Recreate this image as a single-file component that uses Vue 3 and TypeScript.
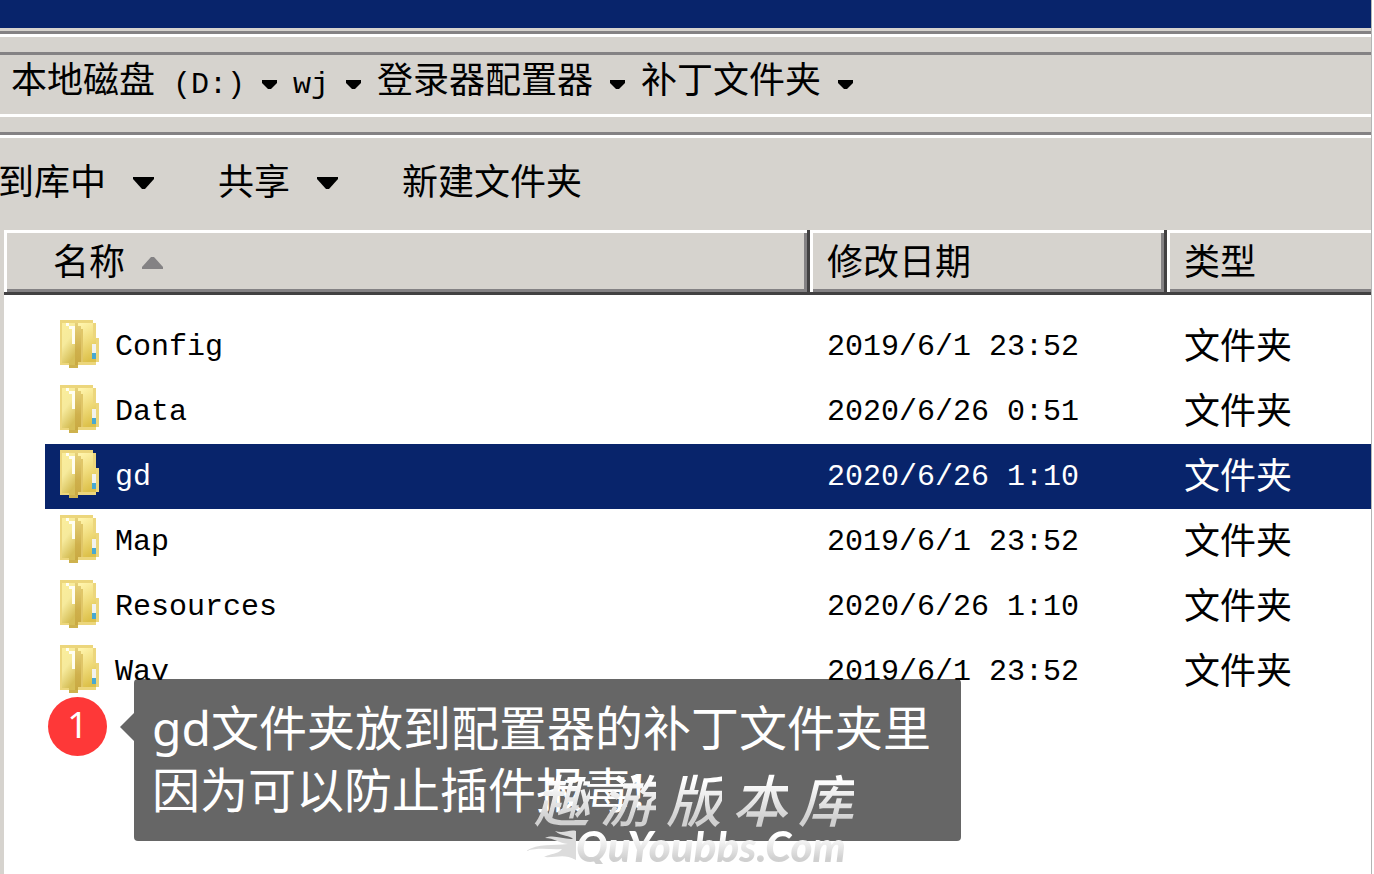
<script setup lang="ts">
interface Crumb {
  label: string
  code: string
}

interface Entry {
  name: string
  modified: string
  type: string
  selected?: boolean
}

const crumbs: Crumb[] = [
  { label: '本地磁盘', code: ' (D:)' },
  { label: '', code: 'wj' },
  { label: '登录器配置器', code: '' },
  { label: '补丁文件夹', code: '' },
]

const entries: Entry[] = [
  { name: 'Config', modified: '2019/6/1 23:52', type: '文件夹' },
  { name: 'Data', modified: '2020/6/26 0:51', type: '文件夹' },
  { name: 'gd', modified: '2020/6/26 1:10', type: '文件夹', selected: true },
  { name: 'Map', modified: '2019/6/1 23:52', type: '文件夹' },
  { name: 'Resources', modified: '2020/6/26 1:10', type: '文件夹' },
  { name: 'Wav', modified: '2019/6/1 23:52', type: '文件夹' },
]

const brand: string[] = ['趣', '游', '版', '本', '库']
</script>

<template>
  <div class="window">
    <div class="titlebar"></div>
    <div class="groove"></div>

    <nav class="address" aria-label="地址">
      <button v-for="c in crumbs" :key="c.label + c.code" type="button" class="crumb">
        <span>{{ c.label }}<span class="code">{{ c.code }}</span></span>
        <svg viewBox="0 0 15 9" width="15" height="9">
          <path d="M0 0H15V3L9 9H6L0 3Z" />
        </svg>
      </button>
    </nav>
    <div class="groove wide"></div>

    <div class="toolbar">
      <button type="button" class="tool">
        <span>到库中</span>
        <svg viewBox="0 0 21 12" width="21" height="12">
          <path d="M0 0H21V2L12 12H9L0 2Z" />
        </svg>
      </button>
      <button type="button" class="tool">
        <span>共享</span>
        <svg viewBox="0 0 21 12" width="21" height="12">
          <path d="M0 0H21V2L12 12H9L0 2Z" />
        </svg>
      </button>
      <button type="button" class="tool"><span>新建文件夹</span></button>
    </div>

    <main class="files">
      <table>
        <colgroup>
          <col class="c-name" />
          <col class="c-date" />
          <col />
        </colgroup>
        <thead>
          <tr>
            <th scope="col" class="h-name" aria-sort="ascending">
              <div class="head">
                <span>名称</span>
                <svg viewBox="0 0 21 12" width="21" height="12">
                  <path d="M9 0H12L21 10V12H0V10Z" fill="#848284" />
                </svg>
              </div>
            </th>
            <th scope="col"><div class="head">修改日期</div></th>
            <th scope="col" class="h-last"><div class="head">类型</div></th>
          </tr>
        </thead>
        <tbody>
          <tr v-for="e in entries" :key="e.name" :class="{ selected: e.selected }">
            <td class="name">
              <div class="cell">
                <svg class="folder" viewBox="0 0 39 48" width="39" height="48" aria-hidden="true">
                  <defs>
                    <linearGradient id="cover" x1="0" y1="0" x2="0.4" y2="1">
                      <stop offset="0" stop-color="#fbee9c" />
                      <stop offset="0.5" stop-color="#f6ea9c" />
                      <stop offset="1" stop-color="#d6bf58" />
                    </linearGradient>
                    <linearGradient id="back" x1="0.2" y1="0" x2="0.5" y2="1">
                      <stop offset="0" stop-color="#fff4ac" />
                      <stop offset="0.5" stop-color="#f0dc7c" />
                      <stop offset="1" stop-color="#dcc04a" />
                    </linearGradient>
                    <linearGradient id="spine" x1="0" y1="0" x2="0" y2="1">
                      <stop offset="0" stop-color="#e6d07a" />
                      <stop offset="0.6" stop-color="#cfb04c" />
                      <stop offset="1" stop-color="#c8a840" />
                    </linearGradient>
                  </defs>
                  <path d="M0 0H33V3H36V18H39V42H36V45H18V48H9V45H0Z" fill="#ecd67c" />
                  <path d="M18 3H33V18H36V42H18Z" fill="url(#back)" />
                  <path d="M2 3H15V45H9V43H2Z" fill="url(#cover)" />
                  <path d="M6 3H9V6H15V24H12V9H9V6H6Z" fill="#fffef2" />
                  <path d="M15 3H18V6H21V42H18V48H15Z" fill="url(#spine)" />
                  <path d="M21 9H23V42H21Z" fill="#e0c668" />
                  <path d="M9 45H18V48H9Z" fill="#ceb24e" />
                  <path d="M32 24H36V33H32Z" fill="#f2f2ee" />
                  <path d="M32 33H36V39H32Z" fill="#48a9d2" />
                </svg>
                <span>{{ e.name }}</span>
              </div>
            </td>
            <td>{{ e.modified }}</td>
            <td class="type">{{ e.type }}</td>
          </tr>
        </tbody>
      </table>
    </main>

    <aside class="note">
      <span class="badge">1</span>
      <p class="bubble">gd文件夹放到配置器的补丁文件夹里<br />因为可以防止插件报毒!</p>
    </aside>

    <div class="mark">
      <div class="mark-cn"><span v-for="ch in brand" :key="ch">{{ ch }}</span></div>
      <div class="mark-en">
        <svg viewBox="0 0 50 34" width="50" height="34" aria-hidden="true">
          <path d="M50 2C44 0 38 5 29 2C36 8 44 6 47 10C38 11 28 5 19 9C28 9 33 14 42 15C28 17 12 14 0 22C14 18 24 21 36 20C31 26 25 24 18 28C30 29 38 24 50 31Z" fill="#dcdcdc" />
        </svg>
        <span>QuYoubbs.Com</span>
      </div>
    </div>
  </div>
</template>

<style>
html,
body,
#app {
  height: 100%;
}
body {
  margin: 0;
  overflow: hidden;
  background: #fff;
}
</style>

<style scoped>
.window {
  position: relative;
  display: flex;
  flex-direction: column;
  box-sizing: border-box;
  min-height: 100%;
  margin-right: 2px;
  border-right: 1px solid #b4b4b4;
  background: #d6d3ce;
  color: #000;
  font-family: "Liberation Mono", "Noto Sans CJK SC", monospace;
  font-size: 30px;
  line-height: 48px;
  overflow: hidden;
}
button {
  margin: 0;
  padding: 0;
  border: 0;
  background: none;
  color: inherit;
  font: inherit;
  white-space: pre;
}
.titlebar {
  height: 28px;
  background: #08246b;
}
.groove {
  height: 18px;
  margin-top: 3px;
  border-top: 3px solid #848284;
  border-bottom: 3px solid #848284;
  box-shadow: inset 0 3px #fff;
}
.groove.wide {
  height: 15px;
  margin-top: 0;
  border-top-color: #fff;
  box-shadow: 0 3px #fff;
}
.address {
  display: flex;
  align-items: center;
  gap: 16px;
  height: 59px;
  padding-left: 11px;
}
.crumb {
  display: flex;
  align-items: center;
  gap: 17px;
  font-size: 36px;
}
.code {
  font-size: 30px;
}
.toolbar {
  display: flex;
  align-items: center;
  gap: 64px;
  height: 95px;
  margin-left: -2px;
}
.tool {
  display: flex;
  align-items: center;
  gap: 27px;
  font-family: "Liberation Sans", "Noto Sans CJK SC", sans-serif;
  font-size: 36px;
}
.files {
  flex: 1;
  margin-left: 4px;
  background: #fff;
}
table {
  width: 100%;
  table-layout: fixed;
  border-spacing: 0;
}
.c-name {
  width: 806px;
}
.c-date {
  width: 357px;
}
th {
  height: 65px;
  padding: 0;
  background: #d6d3ce;
  font-family: "Liberation Sans", "Noto Sans CJK SC", sans-serif;
  font-weight: 400;
  font-size: 36px;
  text-align: left;
  box-shadow: inset -3px -3px #424142, inset 3px 3px #fff, inset -6px -6px #848284;
}
.h-last {
  box-shadow: inset 0 -3px #424142, inset 3px 3px #fff, inset 0 -6px #848284;
}
.head {
  display: flex;
  align-items: center;
  gap: 17px;
  padding-left: 17px;
}
.h-name .head {
  padding-left: 49px;
}
td {
  height: 65px;
  padding: 0 0 0 17px;
}
.type {
  font-family: "Liberation Sans", "Noto Sans CJK SC", sans-serif;
  font-size: 36px;
}
tbody tr:first-child td {
  padding-top: 19px;
}
td.name {
  padding-left: 41px;
}
.cell {
  display: flex;
  align-items: center;
  gap: 16px;
  height: 65px;
  padding-left: 15px;
}
.folder {
  margin-bottom: 6px;
}
.selected td:not(.name),
.selected .cell {
  background: #08246b;
  color: #fff;
}
.note {
  position: absolute;
  top: 679px;
  left: 48px;
  display: flex;
  gap: 27px;
  font-family: "Noto Sans", "Noto Sans CJK SC", sans-serif;
  color: #fff;
}
.badge {
  width: 59px;
  height: 59px;
  margin-top: 18px;
  border-radius: 50%;
  background: #fe3838;
  font-size: 36px;
  line-height: 56px;
  text-align: center;
}
.bubble {
  position: relative;
  margin: 0;
  padding: 18px 30px 20px 18px;
  border-radius: 4px;
  background: rgba(0, 0, 0, 0.6);
  font-size: 48px;
  line-height: 62px;
  white-space: nowrap;
}
.bubble::before {
  content: "";
  position: absolute;
  top: 34px;
  left: -14px;
  border: 14px solid transparent;
  border-left-width: 0;
  border-right-color: rgba(0, 0, 0, 0.6);
}
.mark {
  position: absolute;
  top: 768px;
  left: 526px;
  font-weight: 700;
  font-style: italic;
}
.mark span {
  background: linear-gradient(#fff 20%, #d0d0d0 85%);
  background-clip: text;
  -webkit-background-clip: text;
  color: transparent;
}
.mark-cn {
  display: flex;
  gap: 10px;
  padding-left: 8px;
  font-family: "Noto Sans CJK SC", sans-serif;
  font-weight: 500;
  font-size: 56px;
  line-height: 60px;
}
.mark-en {
  display: flex;
  align-items: center;
  font-family: Lato, sans-serif;
  font-weight: 900;
  font-size: 42px;
  line-height: 36px;
}
.mark-en span {
  padding-right: 6px;
}
</style>
